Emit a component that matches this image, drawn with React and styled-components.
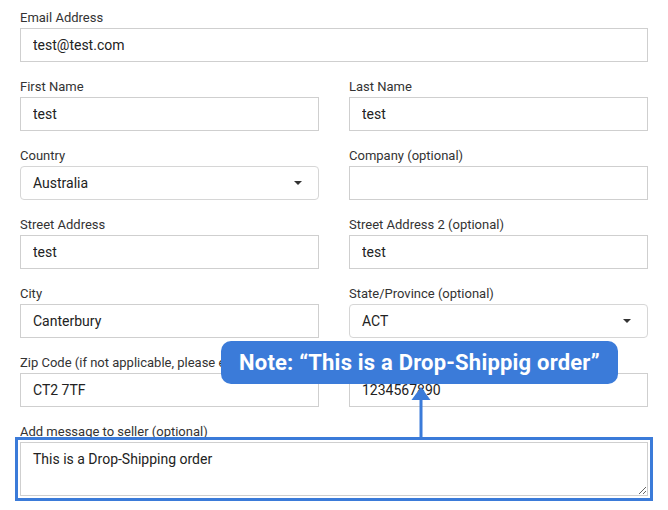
import React from "react";
import styled, { createGlobalStyle } from "styled-components";

const Global = createGlobalStyle`
  html, body { margin: 0; padding: 0; background: #fff; }
  body { font-family: Roboto, "Liberation Sans", Arial, sans-serif; min-height: 510px; }
  * { box-sizing: border-box; }
`;

const BLUE = "#3b7bd9";

const Form = styled.form`
  position: relative;
  width: 668px;
  padding: 10px 20px 10px 20px;
  display: grid;
  grid-template-columns: 299px 299px;
  column-gap: 30px;
  row-gap: 17px;
`;

const Field = styled.div`
  display: flex;
  flex-direction: column;
  gap: 2px;
  grid-column: ${(p) => (p.$full ? "1 / -1" : "auto")};
  position: relative;
`;

const Label = styled.label`
  font-size: 13px;
  line-height: 16px;
  color: #333;
  white-space: nowrap;
  overflow: hidden;
`;

const Input = styled.input`
  height: 34px;
  width: 100%;
  border: 1px solid #cfcfcf;
  border-radius: 0;
  padding: 0 12px;
  font-family: inherit;
  font-size: 14px;
  color: #222;
  background: #fff;
  outline: none;
`;

const SelectBox = styled.div`
  height: 34px;
  width: 100%;
  border: 1px solid #d6d6d6;
  border-radius: 4px;
  padding: 0 12px;
  display: flex;
  align-items: center;
  justify-content: space-between;
  font-size: 14px;
  color: #222;
`;

const Caret = styled.span`
  width: 0;
  height: 0;
  border-left: 4px solid transparent;
  border-right: 4px solid transparent;
  border-top: 4px solid #333;
  margin-right: 4px;
`;

const TextArea = styled.textarea`
  height: 54px;
  width: 100%;
  border: 1px solid #cfcfcf;
  padding: 7px 12px;
  font-family: inherit;
  font-size: 14px;
  line-height: 18px;
  color: #222;
  resize: vertical;
  outline: none;
  display: block;
  margin: 0;
`;

const AreaWrap = styled.div`
  position: relative;
  height: 54px;
`;

const HighlightFrame = styled.div`
  position: absolute;
  left: -5px;
  right: -5px;
  top: -5px;
  height: 64px;
  border: 3px solid ${BLUE};
  pointer-events: none;
  z-index: 2;
`;

const Callout = styled.div`
  position: absolute;
  left: 221px;
  top: 341px;
  width: 397px;
  height: 43px;
  border-radius: 10px;
  background: ${BLUE};
  color: #fff;
  font-size: 22px;
  font-weight: 700;
  letter-spacing: 0.2px;
  display: flex;
  align-items: center;
  justify-content: center;
  white-space: nowrap;
`;

const Arrow = styled.svg`
  position: absolute;
  left: 410px;
  top: 386px;
`;

const Select = ({ value }) => (
  <SelectBox>
    <span>{value}</span>
    <Caret />
  </SelectBox>
);

export default function App() {
  return (
    <>
      <Global />
      <Form onSubmit={(e) => e.preventDefault()}>
        <Field $full>
          <Label>Email Address</Label>
          <Input defaultValue="test@test.com" />
        </Field>
        <Field>
          <Label>First Name</Label>
          <Input defaultValue="test" />
        </Field>
        <Field>
          <Label>Last Name</Label>
          <Input defaultValue="test" />
        </Field>
        <Field>
          <Label>Country</Label>
          <Select value="Australia" />
        </Field>
        <Field>
          <Label>Company (optional)</Label>
          <Input defaultValue="" />
        </Field>
        <Field>
          <Label>Street Address</Label>
          <Input defaultValue="test" />
        </Field>
        <Field>
          <Label>Street Address 2 (optional)</Label>
          <Input defaultValue="test" />
        </Field>
        <Field>
          <Label>City</Label>
          <Input defaultValue="Canterbury" />
        </Field>
        <Field>
          <Label>State/Province (optional)</Label>
          <Select value="ACT" />
        </Field>
        <Field>
          <Label>Zip Code (if not applicable, please enter 00000)</Label>
          <Input defaultValue="CT2 7TF" />
        </Field>
        <Field>
          <Label>Phone Number</Label>
          <Input defaultValue="1234567890" />
        </Field>
        <Field $full>
          <Label>Add message to seller (optional)</Label>
          <AreaWrap>
            <TextArea defaultValue="This is a Drop-Shipping order" />
            <HighlightFrame />
          </AreaWrap>
        </Field>
        <Callout>Note: “This is a Drop-Shippig order”</Callout>
        <Arrow width="22" height="52" viewBox="0 0 22 52">
          <polygon points="11,1 1.5,14 20.5,14" fill={BLUE} />
          <rect x="9.5" y="12" width="3" height="40" fill={BLUE} />
        </Arrow>
      </Form>
    </>
  );
}
